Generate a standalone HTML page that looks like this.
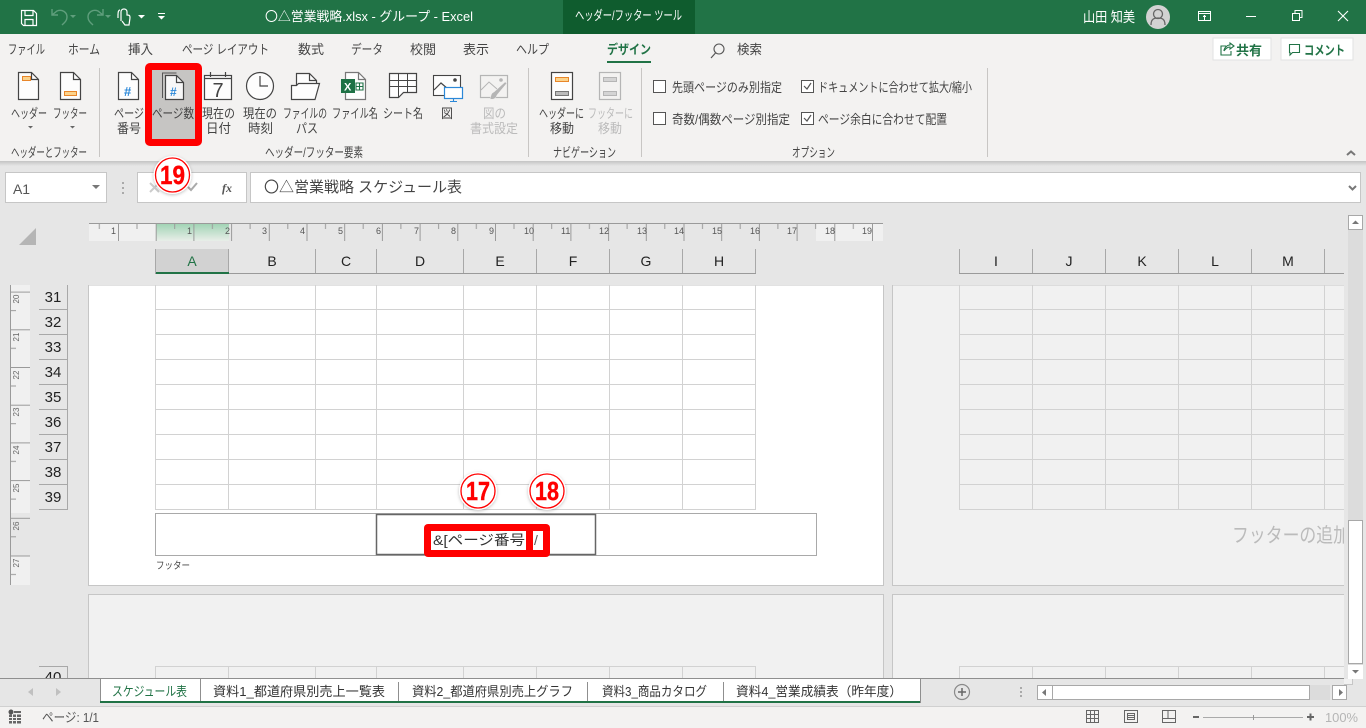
<!DOCTYPE html>
<html lang="ja"><head><meta charset="utf-8"><title>Excel</title>
<style>
html,body{margin:0;padding:0;width:1366px;height:728px;overflow:hidden;background:#e6e6e6}
svg{display:block;position:absolute;left:0;top:0}
text{font-family:"Liberation Sans","Noto Sans CJK JP",sans-serif;font-size:13px;fill:#444}
.w text{fill:#fff}
.d{fill:#bbb}
.g{stroke:#d2d2d2;stroke-width:1;fill:none;shape-rendering:crispEdges}
.c{stroke:#a8a8a8;stroke-width:1;fill:none;shape-rendering:crispEdges}
.ic{fill:#fff;stroke:#444;stroke-width:1.2}
.l{stroke:#444;stroke-width:1.2;fill:none}
.hd text{font-size:14px;text-anchor:middle;fill:#222}
.rn text{font-size:15px;text-anchor:middle;fill:#222}
.rl text{font-size:8px;fill:#666;text-anchor:middle}
.cjk{font-family:"Noto Sans CJK JP",sans-serif}
.badge{font-size:26px;font-weight:bold;fill:#f00;stroke:#f00;stroke-width:.4;font-family:"Liberation Sans",sans-serif}
</style></head><body>
<svg width="1366" height="728" viewBox="0 0 1366 728" xmlns="http://www.w3.org/2000/svg">
<defs>
<linearGradient id="gr" x1="0" y1="0" x2="0" y2="1"><stop offset="0" stop-color="#9ed2b2"/><stop offset="1" stop-color="#e8eee9"/></linearGradient>
<linearGradient id="sh" x1="0" y1="0" x2="0" y2="1"><stop offset="0" stop-color="#c4c4c4"/><stop offset="1" stop-color="#e6e6e6"/></linearGradient>
<pattern id="rh" patternUnits="userSpaceOnUse" x="118" y="223" width="37.7" height="18"><line x1=".5" y1="0" x2=".5" y2="18" stroke="#9a9a9a"/><line x1="19" y1="0" x2="19" y2="6" stroke="#9a9a9a"/></pattern>
<pattern id="rv" patternUnits="userSpaceOnUse" x="10" y="291.6" width="20" height="37.7"><line x1="0" y1=".5" x2="20" y2=".5" stroke="#9a9a9a"/><line x1="0" y1="19" x2="6" y2="19" stroke="#9a9a9a"/></pattern>
<filter id="bs" x="-30%" y="-30%" width="160%" height="160%"><feDropShadow dx="0" dy="1" stdDeviation="1.5" flood-color="#000" flood-opacity=".25"/></filter>
</defs>

<!-- base -->
<rect width="1366" height="728" fill="#e6e6e6"/>

<!-- title bar -->
<rect width="1366" height="34" fill="#217346"/>
<rect x="563" width="132" height="34" fill="#0f5c2e"/>
<g fill="none" stroke="#fff" stroke-width="1.2">
<path d="M21.5 10.5h12l3 3v12h-13l-2-2z"/><path d="M25 10.5v5h8v-5M25 25.5v-6h8v6"/>
</g>
<g fill="none" stroke="#5f9e7c" stroke-width="1.4">
<path d="M52 9v6h6M52 15l5-4c5-2 10 1 10 6 0 4-3 6-5 8"/>
<path d="M103 9v6h-6M103 15l-5-4c-5-2-10 1-10 6 0 4 3 6 5 8"/>
</g>
<path d="M70 15h6l-3 3zM105 15h6l-3 3z" fill="#5f9e7c"/>
<path d="M121 21V12c0-4 6-4 6 0v3c3 0 3 1 3 3M118 18v-4M122 21l3 4h4l1-7M120 10c-2 0-2 3-2 5" fill="none" stroke="#fff" stroke-width="1.2"/>
<path d="M138 15h7l-3.500 3.500z" fill="#fff"/>
<path d="M158 13h7v1h-7zM158 16h7l-3.500 3.500z" fill="#fff"/>
<g class="w">
<text x="265" y="21" textLength="208" lengthAdjust="spacingAndGlyphs"><tspan class="cjk">〇△</tspan>営業戦略.xlsx  -  グループ  -  Excel</text>
<text x="575" y="20" textLength="107" lengthAdjust="spacingAndGlyphs">ヘッダー/フッター ツール</text>
<text x="1083" y="22" style="font-size:14px" textLength="52" lengthAdjust="spacingAndGlyphs">山田 知美</text>
</g>
<circle cx="1158" cy="17" r="12" fill="#d2d2d2"/>
<circle cx="1158" cy="14" r="4.500" fill="none" stroke="#666" stroke-width="1.300"/>
<path d="M1151 25c0-6 3-7 7-7s7 1 7 7" fill="none" stroke="#666" stroke-width="1.300"/>
<g fill="none" stroke="#fff" stroke-width="1.100" shape-rendering="crispEdges">
<rect x="1198.500" y="11.500" width="12" height="9"/><path d="M1198 13.500h13M1204.500 20v-4M1203 17l1.500-1.500 1.500 1.500"/>
<path d="M1246 16.500h10"/>
<path d="M1292.500 13.500h7v7h-7zM1295 13v-2.500h7v7h-2.500"/>
</g>
<path d="M1338 11l10 10M1348 11l-10 10" stroke="#fff" stroke-width="1.100" fill="none"/>

<!-- ribbon -->
<rect y="34" width="1366" height="127" fill="#f3f2f1"/>
<rect y="161" width="1366" height="5" fill="url(#sh)"/>
<text x="8" y="54" textLength="37" lengthAdjust="spacingAndGlyphs">ファイル</text>
<text x="68" y="54" textLength="32" lengthAdjust="spacingAndGlyphs">ホーム</text>
<text x="128" y="54" textLength="25" lengthAdjust="spacingAndGlyphs">挿入</text>
<text x="182" y="54" textLength="87" lengthAdjust="spacingAndGlyphs">ページ レイアウト</text>
<text x="298" y="54" textLength="26" lengthAdjust="spacingAndGlyphs">数式</text>
<text x="351" y="54" textLength="32" lengthAdjust="spacingAndGlyphs">データ</text>
<text x="410" y="54" textLength="26" lengthAdjust="spacingAndGlyphs">校閲</text>
<text x="463" y="54" textLength="26" lengthAdjust="spacingAndGlyphs">表示</text>
<text x="516" y="54" textLength="33" lengthAdjust="spacingAndGlyphs">ヘルプ</text>
<text x="607" y="54" textLength="44" lengthAdjust="spacingAndGlyphs" style="fill:#217346;font-weight:bold">デザイン</text>
<rect x="607" y="61" width="44" height="2" fill="#217346"/>
<circle cx="719" cy="49" r="5" fill="none" stroke="#555" stroke-width="1.100"/><path d="M715.500 53l-4.500 5" stroke="#555" stroke-width="1.200"/>
<text x="737" y="54" textLength="25" lengthAdjust="spacingAndGlyphs">検索</text>

<rect x="1213" y="38" width="58" height="22" fill="#fff" stroke="#e2e2e2"/>
<rect x="1281" y="38" width="72" height="22" fill="#fff" stroke="#e2e2e2"/>
<path d="M1226 46h-5v9h10v-4M1224 51c0-3 3-6 6-6v-2l4 3-4 3v-2c-2 0-4 1-6 4" fill="none" stroke="#217346" stroke-width="1.100"/>
<text x="1236" y="55" textLength="26" lengthAdjust="spacingAndGlyphs" style="fill:#217346;font-weight:bold;font-size:13px">共有</text>
<path d="M1289.500 44.500h10v8h-7l-2.500 2.500v-2.500h-.5z" fill="none" stroke="#217346" stroke-width="1.100"/>
<text x="1304" y="55" textLength="41" lengthAdjust="spacingAndGlyphs" style="fill:#217346;font-weight:bold">コメント</text>
<path d="M1347 155l4-3.500 4 3.500" fill="none" stroke="#777" stroke-width="2"/>

<!-- red highlight on ribbon -->
<rect x="145" y="63" width="57" height="83" rx="5" fill="#f00"/>
<rect x="152" y="70" width="43" height="69" fill="#c6c5c3"/>

<!-- ribbon icons -->
<path class="ic" d="M18.500 72.500h13l7 7v20h-20z" style="fill:#fdfdfd"/><path class="l" d="M31.500 72.500v7h7"/>
<rect x="22.500" y="76.500" width="8" height="4" fill="#fbd38d" stroke="#e8862a"/>
<path class="ic" d="M60.500 72.500h13l7 7v20h-20z" style="fill:#fdfdfd"/><path class="l" d="M73.500 72.500v7h7"/>
<rect x="64.500" y="91.500" width="12" height="4" fill="#fbd38d" stroke="#e8862a"/>

<path class="ic" d="M118.500 72.500h13l7 7v20h-20z" style="fill:#fdfdfd"/><path class="l" d="M131.500 72.500v7h7"/>
<text x="124" y="96" style="font-size:13px;font-weight:bold;fill:#2b88d8">#</text>

<path d="M162.500 98v-25h14" fill="none" stroke="#555" stroke-width="1"/>
<path class="ic" d="M165.500 75.500h11l7 7v17h-18z" style="fill:#f7f7f7"/><path class="l" d="M176.500 75.500v7h7"/>
<text x="170" y="96" style="font-size:12px;font-weight:bold;fill:#2b88d8">#</text>

<rect x="204.500" y="75.500" width="27" height="24" fill="#fdfdfd" stroke="#444" stroke-width="1.200"/>
<path d="M204 78.500h28M210.500 72v5M225.500 72v5" class="l"/>
<text x="212.500" y="97" style="font-size:20px;fill:#444">7</text>

<circle cx="260" cy="86" r="13.500" fill="#fdfdfd" stroke="#444" stroke-width="1.200"/>
<path d="M260 76v10h8" class="l"/>

<path class="ic" d="M296.500 73.500h13l7 7v6h-20z" style="fill:#fdfdfd"/><path class="l" d="M309.500 73.500v7h7"/>
<path d="M291.500 99.500v-14h5l2-2h21l-4.500 16z" fill="#fdfdfd" stroke="#444" stroke-width="1.200"/>

<path d="M345.500 72.500h13l7 7v20h-20z" fill="#fdfdfd" stroke="#777" stroke-width="1.200"/><path d="M358.500 72.500v7h7" fill="none" stroke="#777" stroke-width="1.200"/>
<rect x="341" y="79" width="14" height="14" fill="#1e7145"/>
<text x="344" y="90.500" style="font-size:11px;font-weight:bold;fill:#fff">X</text>
<path d="M356 83h7v7h-7zM359.500 83v7M356 86.500h7" fill="none" stroke="#1e7145" stroke-width="1.100"/>

<path d="M389.500 73.500h27v19h-13l-5 5h-9z" fill="#fdfdfd" stroke="#444" stroke-width="1.200"/>
<path d="M389 80.500h28M389 86.500h28M398.500 73v24M407.500 73v19" stroke="#444" fill="none" stroke-width="1"/>

<rect x="433.500" y="75.500" width="27" height="20" fill="#fdfdfd" stroke="#444" stroke-width="1.100"/>
<path d="M434 90l7-7 7 6" class="l" stroke-width="1"/><circle cx="455" cy="80" r="1.800" fill="#444"/>
<rect x="444.500" y="87.500" width="18" height="11" fill="#fff" stroke="#2b88d8" stroke-width="1.200"/><path d="M453.500 99v2.500M450 101.500h7" stroke="#2b88d8" stroke-width="1.100" fill="none"/>

<rect x="480.500" y="75.500" width="27" height="22" fill="#f3f2f1" stroke="#b5b5b5" stroke-width="1.200"/>
<path d="M481 90l8-8 8 7" fill="none" stroke="#b5b5b5"/><circle cx="501" cy="80" r="1.800" fill="#b5b5b5"/>
<path d="M490 99c4 1 6-1 7-4l10-12-2-1-11 10c-3 1-3 4-4 7z" fill="#b5b5b5" stroke="#f3f2f1" stroke-width=".5"/>

<rect x="551.500" y="72.500" width="21" height="27" fill="#fdfdfd" stroke="#444" stroke-width="1.200"/>
<rect x="555.500" y="77.500" width="13" height="4" fill="#fbd38d" stroke="#e8862a"/>
<rect x="555.500" y="91.500" width="13" height="4" fill="#bbb" stroke="#777"/>
<rect x="599.500" y="72.500" width="21" height="27" fill="#f3f2f1" stroke="#b5b5b5" stroke-width="1.200"/>
<rect x="603.500" y="77.500" width="13" height="4" fill="#d4d4d4" stroke="#b5b5b5"/>
<rect x="603.500" y="91.500" width="13" height="4" fill="#d4d4d4" stroke="#b5b5b5"/>

<!-- ribbon labels -->
<text x="11" y="118" textLength="36" lengthAdjust="spacingAndGlyphs">ヘッダー</text>
<text x="53" y="118" textLength="34" lengthAdjust="spacingAndGlyphs">フッター</text>
<path d="M28 126h5l-2.500 2.500zM70 126h5l-2.500 2.500z" fill="#666"/>
<text x="114" y="118" textLength="30" lengthAdjust="spacingAndGlyphs">ページ</text>
<text x="117" y="133" textLength="24" lengthAdjust="spacingAndGlyphs">番号</text>
<text x="152" y="118" textLength="42" lengthAdjust="spacingAndGlyphs">ページ数</text>
<text x="202" y="118" textLength="33" lengthAdjust="spacingAndGlyphs">現在の</text>
<text x="206" y="133" textLength="25" lengthAdjust="spacingAndGlyphs">日付</text>
<text x="243" y="118" textLength="34" lengthAdjust="spacingAndGlyphs">現在の</text>
<text x="248" y="133" textLength="25" lengthAdjust="spacingAndGlyphs">時刻</text>
<text x="283" y="118" textLength="44" lengthAdjust="spacingAndGlyphs">ファイルの</text>
<text x="296" y="133" textLength="22" lengthAdjust="spacingAndGlyphs">パス</text>
<text x="332" y="118" textLength="46" lengthAdjust="spacingAndGlyphs">ファイル名</text>
<text x="383" y="118" textLength="40" lengthAdjust="spacingAndGlyphs">シート名</text>
<text x="441" y="118" textLength="12" lengthAdjust="spacingAndGlyphs">図</text>
<text x="483" y="118" textLength="23" lengthAdjust="spacingAndGlyphs" class="d">図の</text>
<text x="470" y="133" textLength="48" lengthAdjust="spacingAndGlyphs" class="d">書式設定</text>
<text x="539" y="118" textLength="45" lengthAdjust="spacingAndGlyphs">ヘッダーに</text>
<text x="550" y="133" textLength="24" lengthAdjust="spacingAndGlyphs">移動</text>
<text x="588" y="118" textLength="45" lengthAdjust="spacingAndGlyphs" class="d">フッターに</text>
<text x="598" y="133" textLength="24" lengthAdjust="spacingAndGlyphs" class="d">移動</text>
<text x="11" y="157" textLength="76" lengthAdjust="spacingAndGlyphs">ヘッダーとフッター</text>
<text x="265" y="157" textLength="98" lengthAdjust="spacingAndGlyphs">ヘッダー/フッター要素</text>
<text x="553" y="157" textLength="63" lengthAdjust="spacingAndGlyphs">ナビゲーション</text>
<text x="792" y="157" textLength="43" lengthAdjust="spacingAndGlyphs">オプション</text>
<path d="M99.500 68v89M528.500 68v89M641.500 68v89M987.500 68v89" stroke="#c8c6c4" fill="none" shape-rendering="crispEdges"/>

<!-- options -->
<rect x="653.500" y="80.500" width="12" height="12" fill="#fff" stroke="#555"/>
<rect x="653.500" y="112.500" width="12" height="12" fill="#fff" stroke="#555"/>
<rect x="801.500" y="80.500" width="12" height="12" fill="#fff" stroke="#555"/>
<rect x="801.500" y="112.500" width="12" height="12" fill="#fff" stroke="#555"/>
<path d="M804 86l3 3 4-6M804 118l3 3 4-6" fill="none" stroke="#555" stroke-width="1.200"/>
<text x="672" y="92" textLength="110" lengthAdjust="spacingAndGlyphs">先頭ページのみ別指定</text>
<text x="672" y="124" textLength="118" lengthAdjust="spacingAndGlyphs">奇数/偶数ページ別指定</text>
<text x="818" y="92" textLength="154" lengthAdjust="spacingAndGlyphs">ドキュメントに合わせて拡大/縮小</text>
<text x="818" y="124" textLength="129" lengthAdjust="spacingAndGlyphs">ページ余白に合わせて配置</text>

<!-- formula bar -->
<rect x="5.500" y="172.500" width="101" height="30" fill="#fff" stroke="#c6c6c6"/>
<text x="13" y="194" style="font-size:14px;fill:#555" textLength="17" lengthAdjust="spacing">A1</text>
<path d="M92 185h8l-4 4z" fill="#777"/>
<path d="M122 182h2v2h-2zM122 187h2v2h-2zM122 192h2v2h-2z" fill="#aaa"/>
<rect x="137.500" y="172.500" width="109" height="30" fill="#fff" stroke="#c6c6c6"/>
<path d="M150 183l9 9M159 183l-9 9" fill="none" stroke="#ccc" stroke-width="2"/>
<path d="M188 187l3 3 6-7" fill="none" stroke="#aaa" stroke-width="2"/>
<text x="222" y="192" style="font-size:12px;font-style:italic;font-weight:bold;fill:#555;font-family:'Liberation Serif',serif">fx</text>
<rect x="250.500" y="172.500" width="1110" height="30" fill="#fff" stroke="#c6c6c6"/>
<text x="264" y="192" style="font-size:15px" textLength="198" lengthAdjust="spacingAndGlyphs"><tspan class="cjk">〇△</tspan>営業戦略 スケジュール表</text>
<path d="M1349 186l3.500 3.500 3.500-3.500" fill="none" stroke="#777" stroke-width="2"/>

<!-- corner -->
<path d="M19 245l17-17v17z" fill="#b5b5b5"/>

<!-- h ruler -->
<rect x="89" y="223" width="67" height="18" fill="#f0f0f0"/>
<rect x="156" y="223" width="73" height="18" fill="url(#gr)"/>
<rect x="816" y="223" width="67" height="18" fill="#f0f0f0"/>
<rect x="89" y="223" width="794" height="18" fill="url(#rh)"/>
<path d="M89 223.500h794" stroke="#9a9a9a" shape-rendering="crispEdges"/>
<g>
<text x="111" y="234" style="font-size:9px;fill:#555">1</text><text x="187" y="234" style="font-size:9px;fill:#555">1</text><text x="225" y="234" style="font-size:9px;fill:#555">2</text><text x="262" y="234" style="font-size:9px;fill:#555">3</text><text x="300" y="234" style="font-size:9px;fill:#555">4</text><text x="338" y="234" style="font-size:9px;fill:#555">5</text><text x="376" y="234" style="font-size:9px;fill:#555">6</text><text x="414" y="234" style="font-size:9px;fill:#555">7</text><text x="451" y="234" style="font-size:9px;fill:#555">8</text><text x="489" y="234" style="font-size:9px;fill:#555">9</text><text x="524" y="234" style="font-size:9px;fill:#555">10</text><text x="561" y="234" style="font-size:9px;fill:#555">11</text><text x="599" y="234" style="font-size:9px;fill:#555">12</text><text x="637" y="234" style="font-size:9px;fill:#555">13</text><text x="674" y="234" style="font-size:9px;fill:#555">14</text><text x="712" y="234" style="font-size:9px;fill:#555">15</text><text x="750" y="234" style="font-size:9px;fill:#555">16</text><text x="787" y="234" style="font-size:9px;fill:#555">17</text><text x="825" y="234" style="font-size:9px;fill:#555">18</text><text x="862" y="234" style="font-size:9px;fill:#555">19</text>
</g>

<!-- column headers -->
<rect x="156" y="249" width="73" height="24" fill="#d2d2d2"/>
<path d="M155.500 249v24M228.500 249v24M315.500 249v24M376.500 249v24M463.500 249v24M536.500 249v24M609.500 249v24M682.500 249v24M755.500 249v24M959.500 249v24M1032.500 249v24M1105.500 249v24M1178.500 249v24M1251.500 249v24M1324.500 249v24" class="c"/>
<path d="M155 273.500h601M959 273.500h385" stroke="#9a9a9a" shape-rendering="crispEdges"/>
<rect x="156" y="272" width="73" height="2" fill="#217346"/>
<g class="hd">
<text x="192" y="266" style="fill:#217346">A</text><text x="272" y="266">B</text><text x="346" y="266">C</text><text x="420" y="266">D</text><text x="500" y="266">E</text><text x="573" y="266">F</text><text x="646" y="266">G</text><text x="719" y="266">H</text>
<text x="996" y="266">I</text><text x="1069" y="266">J</text><text x="1142" y="266">K</text><text x="1215" y="266">L</text><text x="1288" y="266">M</text>
</g>

<!-- v ruler -->
<rect x="10" y="285" width="20" height="228" fill="#f0f0f0"/>
<rect x="10" y="556" width="20" height="29" fill="#f0f0f0"/>
<rect x="10" y="285" width="20" height="300" fill="url(#rv)"/>
<path d="M10.500 285v300" stroke="#9a9a9a" shape-rendering="crispEdges"/>
<g class="rl">
<text transform="translate(19,299) rotate(-90)">20</text><text transform="translate(19,337) rotate(-90)">21</text><text transform="translate(19,375) rotate(-90)">22</text><text transform="translate(19,412) rotate(-90)">23</text><text transform="translate(19,450) rotate(-90)">24</text><text transform="translate(19,488) rotate(-90)">25</text><text transform="translate(19,526) rotate(-90)">26</text><text transform="translate(19,563) rotate(-90)">27</text>
</g>

<!-- row headers -->
<path d="M67.500 285v224M39 309.500h29M39 334.500h29M39 359.500h29M39 384.500h29M39 409.500h29M39 434.500h29M39 459.500h29M39 484.500h29M39 509.500h29M39 666.500h29M67.500 666v12" class="c"/>
<g class="rn">
<text x="53" y="302">31</text><text x="53" y="327">32</text><text x="53" y="352">33</text><text x="53" y="377">34</text><text x="53" y="402">35</text><text x="53" y="427">36</text><text x="53" y="452">37</text><text x="53" y="477">38</text><text x="53" y="502">39</text><text x="53" y="682">40</text>
</g>

<!-- pages -->
<rect x="88.500" y="285" width="795" height="300.500" fill="#fff" stroke="#c6c6c6"/>
<rect x="88" y="284" width="797" height="1" fill="#e6e6e6"/>
<rect x="892.500" y="285" width="460" height="300.500" fill="#f1f1f1" stroke="#c6c6c6"/>
<rect x="892" y="284" width="460" height="1" fill="#e6e6e6"/>
<rect x="88.500" y="594.500" width="795" height="90" fill="#f1f1f1" stroke="#c6c6c6"/>
<rect x="892.500" y="594.500" width="460" height="90" fill="#f1f1f1" stroke="#c6c6c6"/>

<!-- grid -->
<path class="g" d="M155.500 285v224M228.500 285v224M315.500 285v224M376.500 285v224M463.500 285v224M536.500 285v224M609.500 285v224M682.500 285v224M755.500 285v224M155 309.500h601M155 334.500h601M155 359.500h601M155 384.500h601M155 409.500h601M155 434.500h601M155 459.500h601M155 484.500h601M155 509.500h601"/>
<path class="g" d="M959.500 285v224M1032.500 285v224M1105.500 285v224M1178.500 285v224M1251.500 285v224M1324.500 285v224M959 309.500h385M959 334.500h385M959 359.500h385M959 384.500h385M959 409.500h385M959 434.500h385M959 459.500h385M959 484.500h385M959 509.500h385"/>
<path class="g" d="M155 666.500h601M155.500 666v12M228.500 666v12M315.500 666v12M376.500 666v12M463.500 666v12M536.500 666v12M609.500 666v12M682.500 666v12M755.500 666v12M959 666.500h385M959.500 666v12M1032.500 666v12M1105.500 666v12M1178.500 666v12M1251.500 666v12M1324.500 666v12"/>

<!-- footer -->
<rect x="155.500" y="513.500" width="661" height="42" fill="#fff" stroke="#a9a9a9"/>
<rect x="376.500" y="514.500" width="219" height="40" fill="#fff" stroke="#666" stroke-width="1.500"/>
<text x="156" y="569" style="font-size:10px" textLength="34" lengthAdjust="spacingAndGlyphs">フッター</text>
<rect x="424" y="524" width="126" height="33" rx="4" fill="#f00"/>
<rect x="431" y="531" width="95" height="19" fill="#fff"/>
<rect x="533" y="531" width="10" height="19" fill="#fff"/>
<text x="433" y="545" style="font-size:14px;fill:#333" textLength="92" lengthAdjust="spacingAndGlyphs">&amp;[ページ番号</text>
<text x="534" y="545" style="font-size:14px;fill:#555">/</text>
<text x="1232" y="542" style="font-size:20px;fill:#bbb" textLength="118" lengthAdjust="spacingAndGlyphs">フッターの追加</text>

<!-- scrollbars -->
<rect x="1344" y="205" width="22" height="474" fill="#e6e6e6"/>
<rect x="1348" y="230" width="15" height="449" fill="#dcdcdc"/>
<rect x="1348.500" y="215.500" width="14" height="14" fill="#fff" stroke="#a8a8a8"/>
<path d="M1352 224h7l-3.500-3.500z" fill="#777"/>
<rect x="1348.500" y="520.500" width="14" height="143" fill="#fff" stroke="#a8a8a8"/>
<rect x="1348" y="665" width="15" height="14" fill="#fff"/>
<path d="M1352 670h7l-3.500 3.500z" fill="#777"/>

<!-- sheet tabs -->
<rect y="678" width="1344" height="28" fill="#e6e6e6"/>
<path d="M0 678.500h1344" stroke="#8f8f8f" shape-rendering="crispEdges"/>
<rect x="101" y="679" width="820" height="22" fill="#fff"/>
<rect x="100" y="701" width="821" height="2" fill="#217346"/>
<path d="M100.500 678v23M200.500 678v23M398.500 682v19M587.500 682v19M723.500 682v19M920.500 678v25" stroke="#8f8f8f" shape-rendering="crispEdges"/>
<path d="M33 688v8l-5-4zM56 688v8l5-4z" fill="#c0c0c0"/>
<text x="112" y="696" textLength="75" lengthAdjust="spacingAndGlyphs" style="fill:#217346">スケジュール表</text>
<text x="213" y="696" textLength="172" lengthAdjust="spacingAndGlyphs" style="fill:#333">資料1_都道府県別売上一覧表</text>
<text x="412" y="696" textLength="161" lengthAdjust="spacingAndGlyphs" style="fill:#333">資料2_都道府県別売上グラフ</text>
<text x="602" y="696" textLength="105" lengthAdjust="spacingAndGlyphs" style="fill:#333">資料3_商品カタログ</text>
<text x="736" y="696" textLength="166" lengthAdjust="spacingAndGlyphs" style="fill:#333">資料4_営業成績表（昨年度）</text>
<circle cx="962" cy="692" r="7.500" fill="none" stroke="#8a8a8a" stroke-width="1.200"/>
<path d="M958 692h8M962 688v8" stroke="#666" stroke-width="1.500"/>
<path d="M1020 687h2v2h-2zM1020 691h2v2h-2zM1020 695h2v2h-2z" fill="#aaa"/>
<rect x="1052" y="685" width="278" height="15" fill="#dcdcdc"/>
<rect x="1037.500" y="685.500" width="15" height="14" fill="#fff" stroke="#a8a8a8"/>
<rect x="1052.500" y="685.500" width="257" height="14" fill="#fff" stroke="#a8a8a8"/>
<rect x="1332.500" y="685.500" width="14" height="14" fill="#fff" stroke="#a8a8a8"/>
<path d="M1046 689v7l-4-3.500zM1339 689v7l4-3.500z" fill="#777"/>

<!-- status bar -->
<rect y="706" width="1366" height="22" fill="#f3f2f1"/>
<path d="M0 706.500h1366" stroke="#d0d0d0" shape-rendering="crispEdges"/>
<circle cx="11" cy="712" r="2.500" fill="#555"/>
<path d="M14 711h7v2h-7zM9 714.500h12v9H9z" fill="#666"/>
<path d="M9 717.500h12M9 720.500h12M12.500 714v10M16.500 714v10" stroke="#f3f2f1" stroke-width="1" fill="none"/>
<text x="42" y="722" style="font-size:13px;fill:#555" textLength="57" lengthAdjust="spacingAndGlyphs">ページ: 1/1</text>
<g fill="none" stroke="#666" shape-rendering="crispEdges">
<path d="M1086.500 710.500h12v12h-12zM1086 714.500h13M1086 718.500h13M1090.500 710v13M1094.500 710v13"/>
<path d="M1124.500 710.500h13v12h-13zM1127.500 713.500h7v6h-7zM1128 715.500h6M1128 717.500h6"/>
<path d="M1162.500 710.500h13v12h-13zM1163 718.500h5v-8M1175 718.500h-7"/>
</g>
<rect x="1193" y="716" width="6" height="2" fill="#666"/>
<path d="M1203 717.500h100" stroke="#aaa" shape-rendering="crispEdges"/><path d="M1253.500 715v5" stroke="#999" shape-rendering="crispEdges"/>
<path d="M1307 716h7v2h-7zM1309.500 713.500h2v7h-2z" fill="#666"/>
<text x="1325" y="722" style="font-size:13px;fill:#b5b5b5" textLength="33" lengthAdjust="spacingAndGlyphs">100%</text>

<!-- badges -->
<g>
<circle cx="172.500" cy="175" r="19" fill="#fff" filter="url(#bs)"/><circle cx="172.500" cy="175" r="17" fill="#fff" stroke="#f00" stroke-width="1.300"/>
<text x="160" y="184" class="badge" textLength="25" lengthAdjust="spacingAndGlyphs" style="font-size:26px;font-weight:bold;fill:#f00;font-family:'Liberation Sans',sans-serif">19</text>
<circle cx="478" cy="491" r="19" fill="#fff" filter="url(#bs)"/><circle cx="478" cy="491" r="17" fill="#fff" stroke="#f00" stroke-width="1.300"/>
<text x="466" y="500" class="badge" textLength="24" lengthAdjust="spacingAndGlyphs" style="font-size:26px;font-weight:bold;fill:#f00;font-family:'Liberation Sans',sans-serif">17</text>
<circle cx="547" cy="491" r="19" fill="#fff" filter="url(#bs)"/><circle cx="547" cy="491" r="17" fill="#fff" stroke="#f00" stroke-width="1.300"/>
<text x="535" y="500" class="badge" textLength="24" lengthAdjust="spacingAndGlyphs" style="font-size:26px;font-weight:bold;fill:#f00;font-family:'Liberation Sans',sans-serif">18</text>
</g>
</svg>
</body></html>
